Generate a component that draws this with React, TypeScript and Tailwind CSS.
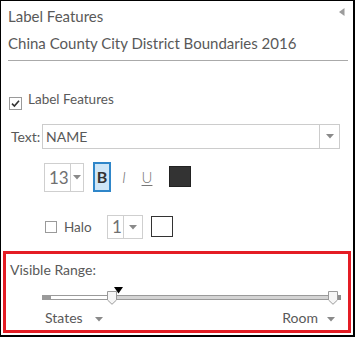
import React from 'react';

const Caret = ({ className = '' }: { className?: string }) => (
  <svg width="8" height="5" viewBox="0 0 8 5" className={className}>
    <polygon points="0,0 8,0 4,4.5" fill="#8a8a8a" />
  </svg>
);

const Checkbox = ({ checked, size = 13 }: { checked?: boolean; size?: number }) => (
  <svg width={size} height={size} viewBox={`0 0 ${size} ${size}`} className="shrink-0">
    <rect x="0.5" y="0.5" width={size - 1} height={size - 1} fill="#fff" stroke="#9a9a9a" />
    {checked && <path d="M3 6.6 L5.4 9 L10 3.8" fill="none" stroke="#333" strokeWidth="1.6" />}
  </svg>
);

const Thumb = ({ left }: { left: number }) => (
  <svg width="10" height="14" viewBox="0 0 10 14" className="absolute top-[4px]" style={{ left }}>
    <polygon points="0.5,0.5 9.5,0.5 9.5,9 5,13.3 0.5,9" fill="#f6f6f6" stroke="#9a9a9a" />
  </svg>
);

const SizeSelect = ({ value, w, left, h }: { value: string; w: number; left: number; h: number }) => (
  <div className="flex border border-[#cfcfcf] bg-white" style={{ width: w, height: h }}>
    <div className="flex items-center pl-[4px] text-[17px] text-[#707070]" style={{ width: left }}>
      {value}
    </div>
    <div className="flex flex-1 items-center justify-center border-l border-[#cfcfcf]">
      <Caret />
    </div>
  </div>
);

export default function App() {
  return (
    <div className="w-[357px] h-[338px] bg-white [font-family:Lato,'Noto_Sans',sans-serif] text-[#595959]">
      <div className="relative flex h-[337px] w-[355px] flex-col border-l border-t border-r-2 border-b-2 border-black">
        {/* collapse arrow */}
        <svg width="6" height="8" viewBox="0 0 6 8" className="absolute left-[338px] top-[7px]">
          <polygon points="5.5,0 5.5,8 0,4" fill="#9c9c9c" />
        </svg>

        <div className="ml-[7px] mt-[5px] h-[20px] text-[15px] leading-[20px]">Label Features</div>
        <div className="ml-[7px] mt-[7px] h-[20px] text-[15px] leading-[20px]">
          China County City District Boundaries 2016
        </div>
        <div className="ml-[7px] mt-[7px] h-px w-[340px] bg-[#aaa]" />

        <div className="mt-[30px] flex items-start">
          <div className="ml-[8px] mt-[6px]">
            <Checkbox checked />
          </div>
          <span className="ml-[6px] h-[16px] text-[13.5px] leading-[16px]">Label Features</span>
        </div>

        <div className="mt-[14px] flex">
          <div className="w-[41px] pl-[10px] text-[14px] leading-[25px]">Text:</div>
          <div className="flex h-[25px] w-[298px] border border-[#ccc]">
            <div className="flex-1 pl-[3px] text-[14px] leading-[23px]">NAME</div>
            <div className="flex w-[20px] items-center justify-center border-l border-[#ccc]">
              <Caret />
            </div>
          </div>
        </div>

        <div className="mt-[13px] flex items-start">
          <div className="ml-[43px] mt-[1px]">
            <SizeSelect value="13" w={40} left={25} h={29} />
          </div>
          <div className="ml-[9px] flex h-[30px] w-[18px] items-center justify-center border-2 border-[#2f86c9] bg-[#cfe6f7] text-[16px] font-bold text-[#333]">
            B
          </div>
          <div className="flex h-[30px] w-[26px] items-center justify-center text-[16px] italic font-light text-[#777]">
            I
          </div>
          <div className="flex h-[30px] w-[20px] items-center justify-center text-[15px] font-light text-[#777] underline underline-offset-2">
            U
          </div>
          <div className="ml-[12px] mt-[4px] h-[21px] w-[22px] border border-[#222] bg-[#333]" />
        </div>

        <div className="mt-[23px] flex items-start">
          <div className="ml-[44px] mt-[6px]">
            <Checkbox size={12} />
          </div>
          <span className="ml-[7px] w-[43px] text-[13.5px] leading-[24px]">Halo</span>
          <SizeSelect value="1" w={36} left={15} h={24} />
          <div className="ml-[8px] mt-[1px] h-[21px] w-[22px] border border-[#333] bg-white" />
        </div>

        <div className="ml-[2px] mt-[12px] flex h-[82px] w-[348px] flex-col border-[3px] border-[#e41c24]">
          <div className="ml-[4px] mt-[8px] h-[16px] text-[14px] leading-[16px]">Visible Range:</div>
          <div className="relative ml-[36px] mt-[9px] h-[17px] w-[299px]">
            <div className="mt-[8px] flex h-[5px]">
              <div className="w-[9px] bg-[#9a9a9a]" />
              <div className="w-[61px] border-y border-[#9a9a9a] bg-white" />
              <div className="w-[225px] border-y border-[#9a9a9a] bg-[#d4d4d4]" />
              <div className="w-[4px] bg-[#8f8f8f]" />
            </div>
            <Thumb left={65} />
            <svg width="9" height="7" viewBox="0 0 9 7" className="absolute left-[72px] top-0">
              <polygon points="0,0 9,0 4.5,6.5" fill="#000" />
            </svg>
            <Thumb left={286} />
          </div>
          <div className="ml-[39px] mr-[13px] mt-[5px] flex h-[18px] justify-between text-[14px] leading-[18px]">
            <div className="flex items-center">
              <span>States</span>
              <Caret className="ml-[12px] mt-[2px]" />
            </div>
            <div className="flex items-center">
              <span>Room</span>
              <Caret className="ml-[9px] mt-[2px]" />
            </div>
          </div>
        </div>
      </div>
    </div>
  );
}
